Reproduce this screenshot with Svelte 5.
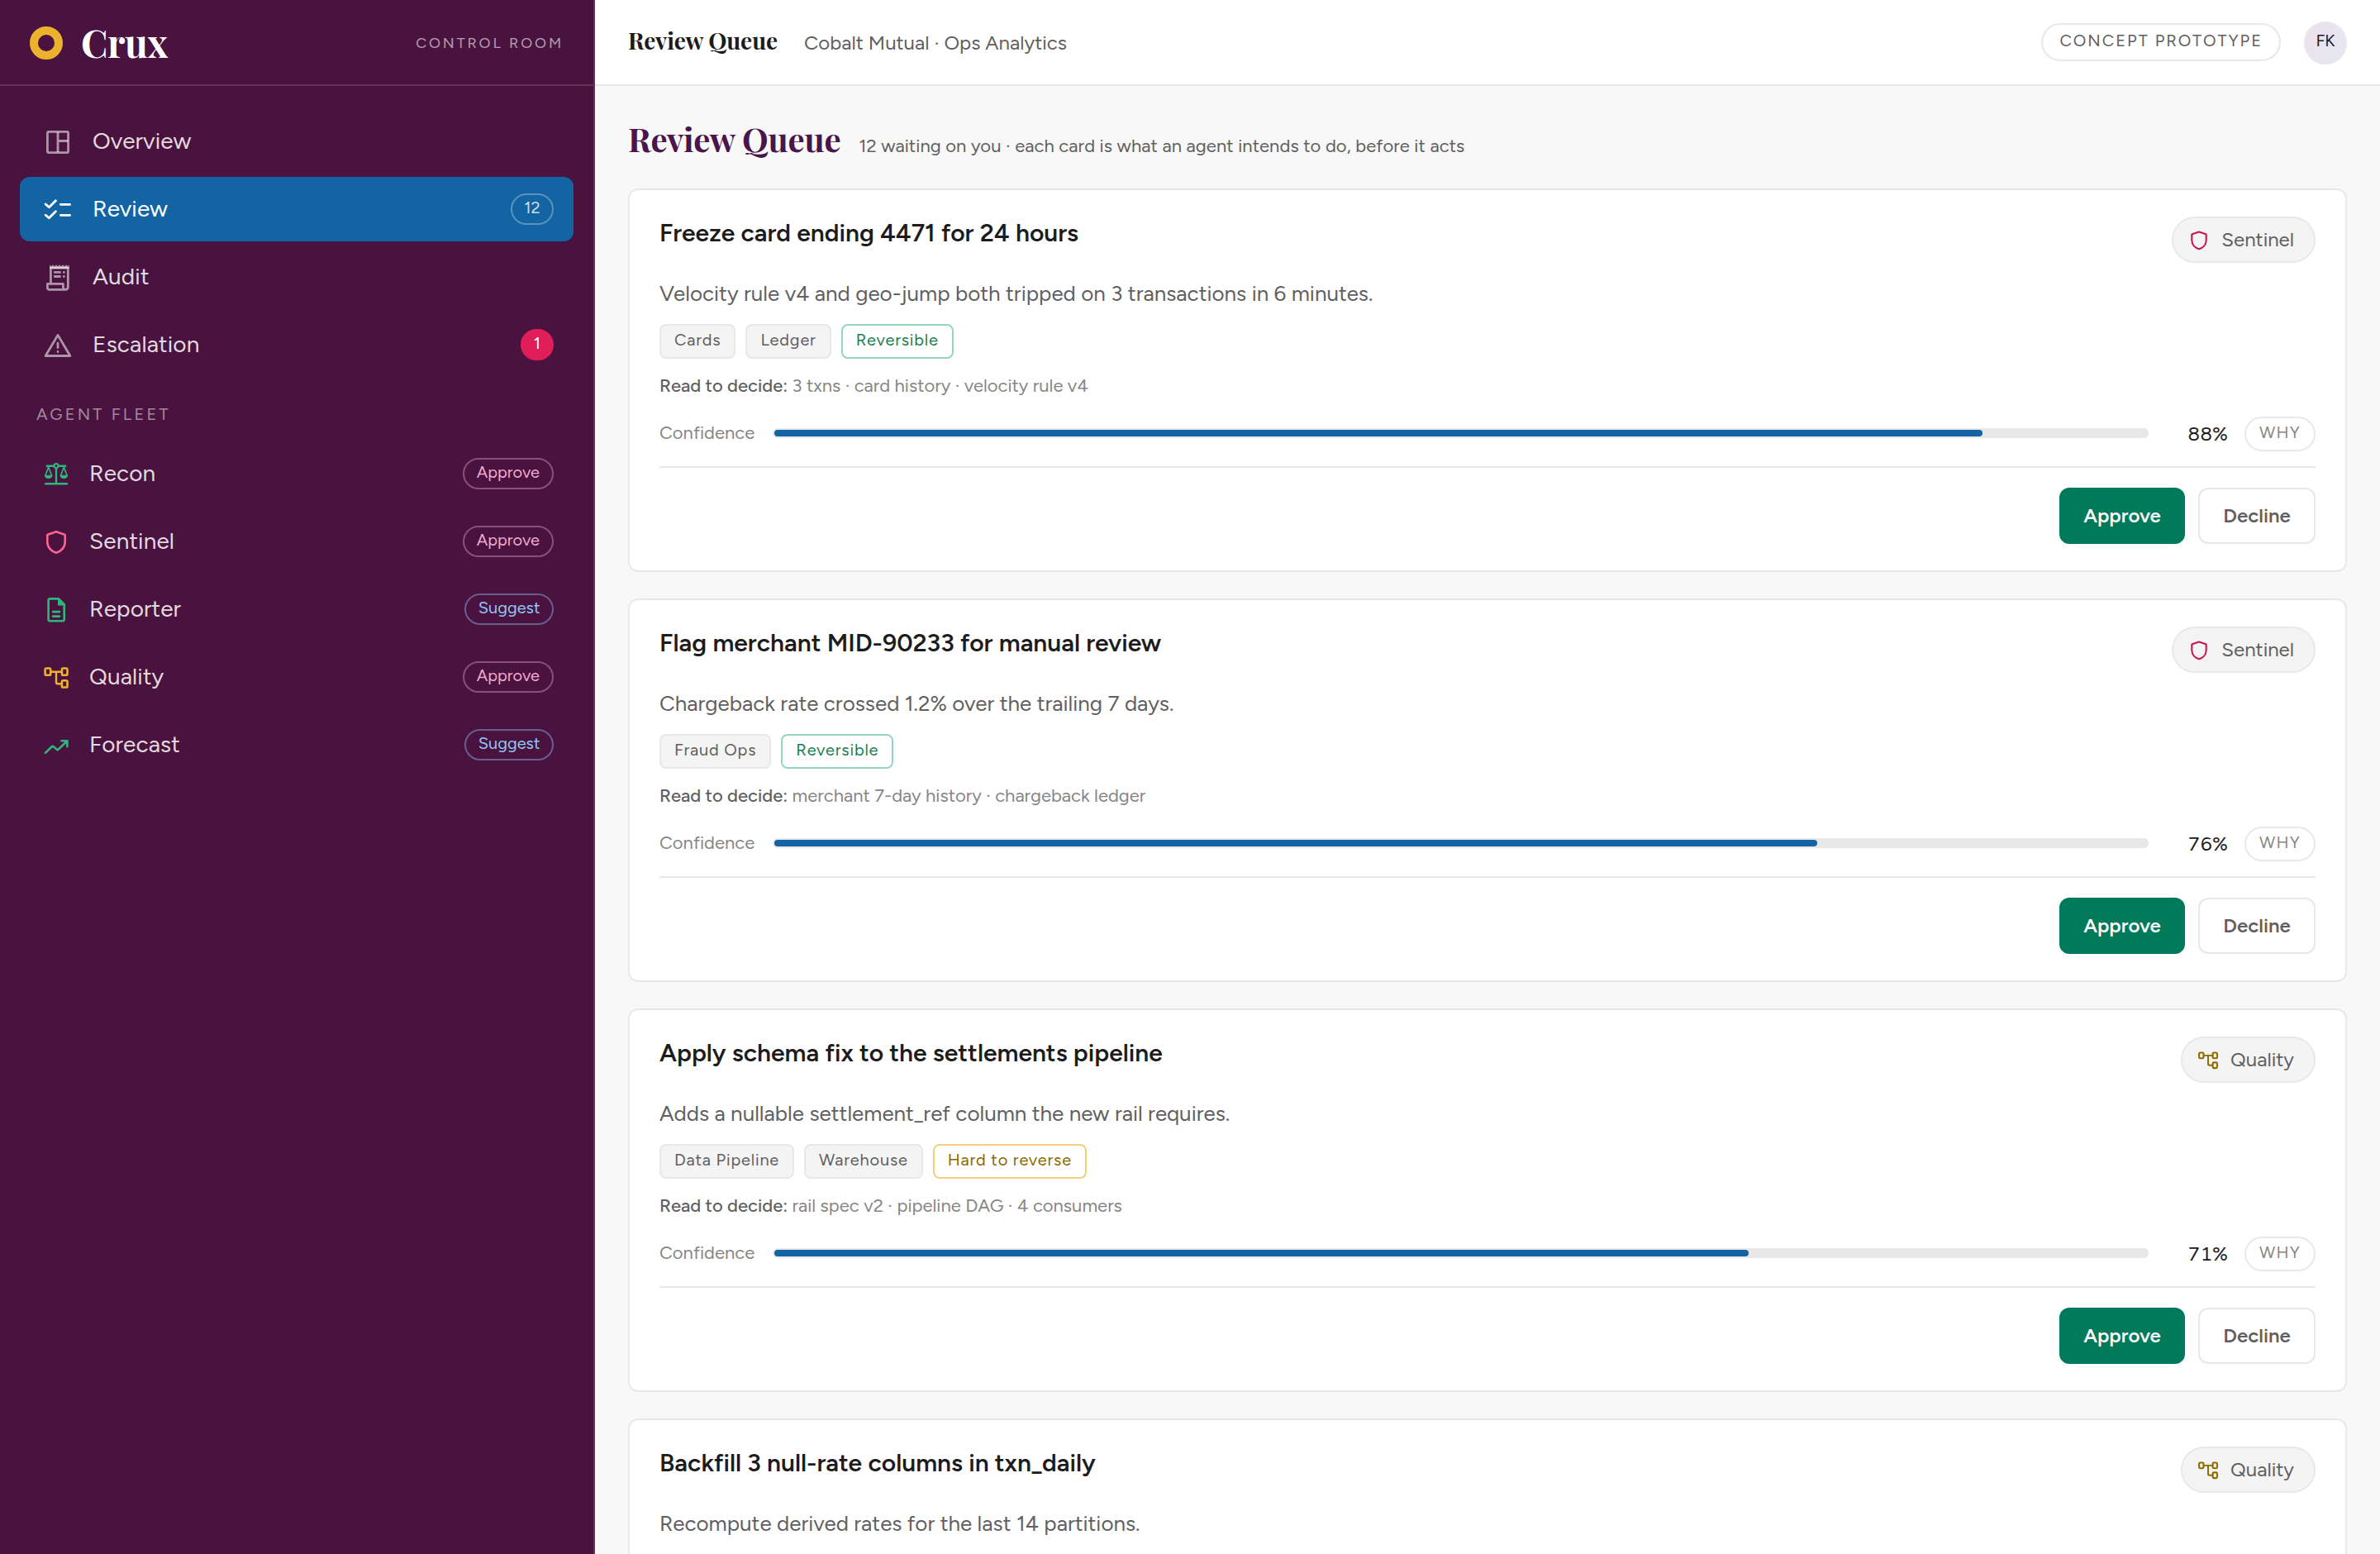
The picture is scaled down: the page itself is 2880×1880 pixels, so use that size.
<script>
  const nav = [
    { label: 'Overview', icon: 'overview' },
    { label: 'Review', icon: 'review', count: 12, active: true },
    { label: 'Audit', icon: 'audit' },
    { label: 'Escalation', icon: 'escalation', alert: 1 }
  ];

  const fleet = [
    { name: 'Recon', icon: 'scales', tone: 'green', mode: 'Approve' },
    { name: 'Sentinel', icon: 'shield', tone: 'pink', mode: 'Approve' },
    { name: 'Reporter', icon: 'file', tone: 'green', mode: 'Suggest' },
    { name: 'Quality', icon: 'flow', tone: 'yellow', mode: 'Approve' },
    { name: 'Forecast', icon: 'trend', tone: 'green', mode: 'Suggest' }
  ];

  const queue = [
    {
      title: 'Freeze card ending 4471 for 24 hours',
      body: 'Velocity rule v4 and geo-jump both tripped on 3 transactions in 6 minutes.',
      agent: 'Sentinel',
      icon: 'shield',
      tags: ['Cards', 'Ledger'],
      reversible: true,
      read: '3 txns · card history · velocity rule v4',
      confidence: 88
    },
    {
      title: 'Flag merchant MID-90233 for manual review',
      body: 'Chargeback rate crossed 1.2% over the trailing 7 days.',
      agent: 'Sentinel',
      icon: 'shield',
      tags: ['Fraud Ops'],
      reversible: true,
      read: 'merchant 7-day history · chargeback ledger',
      confidence: 76
    },
    {
      title: 'Apply schema fix to the settlements pipeline',
      body: 'Adds a nullable settlement_ref column the new rail requires.',
      agent: 'Quality',
      icon: 'flow',
      tags: ['Data Pipeline', 'Warehouse'],
      reversible: false,
      read: 'rail spec v2 · pipeline DAG · 4 consumers',
      confidence: 71
    },
    {
      title: 'Backfill 3 null-rate columns in txn_daily',
      body: 'Recompute derived rates for the last 14 partitions.',
      agent: 'Quality',
      icon: 'flow'
    }
  ];
</script>

{#snippet agentIcon(name, size)}
  <svg viewBox="0 0 32 32" width={size} height={size} fill="none" stroke="currentColor" stroke-width="2.6" stroke-linecap="round" stroke-linejoin="round" aria-hidden="true">
    {#if name === 'scales'}
      <path d="M4.8 6.7h8.4M18.8 6.7h8.4M16 9.7V28M3.2 28.3h25.8" stroke-width="2.4" />
      <circle cx="16" cy="6.5" r="2.6" stroke-width="2" />
      <path d="M6.7 8 2.9 18.2M6.7 8l3.8 10.2M25.3 8l-3.8 10.2M25.3 8l3.8 10.2" stroke-width="1.7" />
      <path d="M2 17.8h9.4c0 2.6-2 4.3-4.7 4.3S2 20.4 2 17.8zM20.6 17.8H30c0 2.6-2 4.3-4.7 4.3s-4.7-1.7-4.7-4.3z" fill="currentColor" stroke="none" />
    {:else if name === 'shield'}
      <path d="M16 4.3 26.2 7.7Q26.7 7.9 26.7 8.5V16.5C26.7 23.5 21.5 28.2 16 29.8C10.5 28.2 5.3 23.5 5.3 16.5V8.5Q5.3 7.9 5.8 7.7Z" />
    {:else if name === 'file'}
      <path d="M8.6 3.4H19L25.7 10.2V28.3a2 2 0 0 1-2 2H8.6a2 2 0 0 1-2-2V5.4a2 2 0 0 1 2-2zM12 19.1h8M12 24.6h8" />
      <path d="M18 3.4 26 11.5H18z" fill="currentColor" stroke="none" />
    {:else if name === 'flow'}
      <rect x="2.6" y="5.5" width="6.6" height="8.3" rx="1.6" />
      <rect x="22.9" y="5.5" width="6.6" height="8.3" rx="1.6" />
      <rect x="22.9" y="20.2" width="6.6" height="8.3" rx="1.6" />
      <path d="M10 9.7h12M16 9.7v12.6a2 2 0 0 0 2 2h4" stroke-width="2.4" />
    {:else if name === 'trend'}
      <path d="M2.9 25.9 10.7 18.3q1-.9 2 0l3.9 3.3q1 .9 2 0L29 11.7M22.5 11.3h6.9v7" />
    {/if}
  </svg>
{/snippet}

<div class="app">
  <aside class="sidebar">
    <div class="brand">
      <span class="mark"></span>
      <span class="brand-name">Crux</span>
      <span class="brand-note">CONTROL ROOM</span>
    </div>

    <nav class="nav">
      {#each nav as item}
        <a class="nav-item" class:active={item.active} href="#{item.icon}">
          <svg viewBox="0 0 36 36" width="36" height="36" fill="none" stroke="currentColor" stroke-width="2.8" stroke-linecap="round" stroke-linejoin="round" aria-hidden="true">
            {#if item.icon === 'overview'}
              <rect x="5.4" y="6.4" width="25.2" height="25.2" rx="1.5" />
              <path d="M18 7v24M18 17.5h12" stroke-linecap="butt" />
            {:else if item.icon === 'review'}
              <path d="M3.2 12 7.4 15.8 15.4 7.8M3.2 25.2 7.4 28.8 15.4 20.8M21.4 12.4h11.2M21.4 25.4h11.2" />
            {:else if item.icon === 'audit'}
              <path d="M9.4 26V7.2H30.3V30.5a2.8 2.8 0 0 1-2.8 2.8H7.4a2 2 0 0 1-2-2V26.4H24.4V30.5a2.8 2.8 0 0 0 2.8 2.8" />
              <path d="M8 8V3.3l2 2 2-2 2 2 2-2 2 2 2-2 2 2 2-2 2 2 2-2 2 2 1.7-2V8z" fill="currentColor" stroke="none" />
              <path d="M14.2 12.4h6.4M14.2 17.5h6.4M25.3 12.4h.1M25.3 17.5h.1" />
            {:else}
              <path d="M18 6.4 32.9 31.5H3.1Z" />
              <path d="M18 16.2v5.4M18 26.4v.1" />
            {/if}
          </svg>
          <span class="label">{item.label}</span>
          {#if item.count}<span class="pill count">{item.count}</span>{/if}
          {#if item.alert}<span class="pill alert">{item.alert}</span>{/if}
        </a>
      {/each}

      <div class="section">AGENT FLEET</div>

      {#each fleet as agent}
        <a class="nav-item agent {agent.tone}" href="#{agent.icon}">
          {@render agentIcon(agent.icon, 32)}
          <span class="label">{agent.name}</span>
          <span class="pill {agent.mode.toLowerCase()}">{agent.mode}</span>
        </a>
      {/each}
    </nav>
  </aside>

  <main class="main">
    <header class="topbar">
      <div class="crumbs">
        <span class="view">Review Queue</span>
        <span class="org">Cobalt Mutual · Ops Analytics</span>
      </div>
      <span class="prototype">CONCEPT PROTOTYPE</span>
      <span class="avatar">FK</span>
    </header>

    <div class="content">
      <div class="heading">
        <h1>Review Queue</h1>
        <p>12 waiting on you · each card is what an agent intends to do, before it acts</p>
      </div>

      <div class="cards">
        {#each queue as item}
          <article class="card">
            <div class="card-head">
              <h2>{item.title}</h2>
              <span class="chip {item.icon}">
                {@render agentIcon(item.icon, 26)}
                <span>{item.agent}</span>
              </span>
            </div>
            <p class="body">{item.body}</p>
            {#if item.tags}
              <div class="tags">
                {#each item.tags as tag}<span class="tag">{tag}</span>{/each}
                {#if item.reversible}
                  <span class="tag ok">Reversible</span>
                {:else}
                  <span class="tag warn">Hard to reverse</span>
                {/if}
              </div>
              <p class="read"><strong>Read to decide:</strong> {item.read}</p>
              <div class="confidence">
                <span class="conf-label">Confidence</span>
                <div class="track"><div class="fill" style:width="{item.confidence}%"></div></div>
                <span class="pct">{item.confidence}%</span>
                <button class="why">WHY</button>
              </div>
              <div class="actions">
                <button class="btn primary">Approve</button>
                <button class="btn">Decline</button>
              </div>
            {/if}
          </article>
        {/each}
      </div>
    </div>
  </main>
</div>

<style>
  :global(body) {
    overflow: hidden;
  }

  .app {
    --line: #e8e8e8;
    --ink: #1d1c1d;
    --muted: #616061;
    --faint: #868686;
    --serif: 'Playfair Display', 'Liberation Serif', serif;
    display: flex;
    height: 100vh;
    overflow: hidden;
    background: #f8f8f8;
    color: var(--ink);
    font-family: Figtree, Inter, sans-serif;
    font-size: 24px;
  }

  .app *,
  .app {
    box-sizing: border-box;
  }

  h1, h2, p {
    margin: 0;
  }

  svg {
    flex: none;
    display: block;
  }

  /* sidebar */
  .sidebar {
    flex: none;
    width: 720px;
    background: #4a123e;
    border-right: 2px solid #653358;
  }

  .brand {
    display: flex;
    align-items: center;
    height: 104px;
    padding: 2px 36px 0;
    border-bottom: 2px solid #653358;
  }

  .mark {
    width: 40px;
    height: 40px;
    border: 10px solid #ecb22e;
    border-radius: 50%;
  }

  .brand-name {
    margin-left: 22px;
    padding-bottom: 2px;
    font: 700 46px/60px var(--serif);
    letter-spacing: -0.01em;
    color: #fff;
  }

  .brand-note {
    margin-left: auto;
    font-size: 18px;
    letter-spacing: 0.16em;
    color: rgba(255, 255, 255, 0.6);
  }

  .nav {
    display: flex;
    flex-direction: column;
    gap: 4px;
    padding: 28px 24px;
  }

  .nav-item {
    display: flex;
    align-items: center;
    height: 78px;
    padding: 0 24px 0 28px;
    border-radius: 12px;
    color: rgba(255, 255, 255, 0.55);
    text-decoration: none;
  }

  .nav-item .label {
    margin-left: 24px;
    padding-bottom: 2px;
    font-size: 28px;
    line-height: 40px;
    letter-spacing: 0.1px;
    color: rgba(255, 255, 255, 0.86);
  }

  .nav-item.active {
    background: #1264a3;
    color: #fff;
  }

  .nav-item.active .label {
    color: #fff;
  }

  .section {
    margin: 26px 0 14px;
    padding-left: 20px;
    font-size: 20px;
    line-height: 30px;
    letter-spacing: 0.16em;
    color: rgba(255, 255, 255, 0.5);
  }

  .agent.green { color: #2eb67d; }
  .agent.pink { color: #ff6490; }
  .agent.yellow { color: #ecb22e; }

  .pill {
    margin-left: auto;
    height: 38px;
    padding: 0 15px;
    border: 2px solid;
    border-radius: 20px;
    font-size: 20px;
    line-height: 30px;
    text-align: center;
  }

  .pill.count {
    width: 52px;
    padding: 0;
    border-color: rgba(255, 255, 255, 0.3);
    color: rgba(255, 255, 255, 0.8);
  }

  .pill.alert {
    width: 40px;
    padding: 0;
    border-color: #e01e5a;
    background: #e01e5a;
    color: #fff;
  }

  .pill.approve {
    border-color: #8c4f7b;
    color: #eda9d4;
  }

  .pill.suggest {
    padding: 0 14.5px;
    border-color: #67608f;
    color: #8fc6f5;
  }

  /* top bar */
  .main {
    flex: 1;
    min-width: 0;
  }

  .topbar {
    display: flex;
    align-items: center;
    height: 104px;
    padding: 0 40px;
    background: #fff;
    border-bottom: 2px solid var(--line);
  }

  .crumbs {
    display: flex;
    align-items: baseline;
    gap: 32px;
    padding-bottom: 5px;
  }

  .view {
    font: 700 28px/40px var(--serif);
    letter-spacing: -0.1px;
  }

  .org {
    color: var(--muted);
  }

  .prototype {
    height: 46px;
    margin-left: auto;
    padding: 0 20px;
    border: 2px solid var(--line);
    border-radius: 23px;
    font-size: 20px;
    line-height: 38px;
    letter-spacing: 0.1em;
    color: var(--muted);
  }

  .avatar {
    width: 52px;
    height: 52px;
    margin: 2px 0 0 28px;
    border: 2px solid var(--line);
    border-radius: 50%;
    background: linear-gradient(135deg, #efe0ec, #e2e9f4);
    font-size: 20px;
    line-height: 42px;
    text-align: center;
  }

  /* queue */
  .content {
    padding: 36px 40px;
  }

  .heading {
    display: flex;
    align-items: baseline;
    gap: 22px;
    height: 56px;
    margin-bottom: 32px;
  }

  h1 {
    font: 700 40px/55px var(--serif);
    letter-spacing: -0.25px;
    color: #4a154b;
  }

  .heading p {
    font-size: 22px;
    letter-spacing: 0.07px;
    color: var(--muted);
  }

  .cards {
    display: flex;
    flex-direction: column;
    gap: 32px;
  }

  .card {
    padding: 32px 36px;
    background: #fff;
    border: 2px solid var(--line);
    border-radius: 12px;
  }

  .card-head {
    display: flex;
    align-items: flex-start;
    justify-content: space-between;
  }

  h2 {
    font-size: 30px;
    font-weight: 600;
    line-height: 40px;
  }

  .chip {
    display: flex;
    align-items: center;
    gap: 14px;
    height: 56px;
    padding: 0 24px 0 18px;
    border: 2px solid var(--line);
    border-radius: 28px;
    background: #f4f4f4;
    line-height: 30px;
    color: var(--muted);
  }

  .chip span {
    padding-bottom: 1px;
  }

  .chip.shield :global(svg) { color: #c6174f; }
  .chip.flow :global(svg) { color: #8f6b00; }

  .body {
    margin-top: 16px;
    font-size: 26px;
    line-height: 42px;
    color: var(--muted);
  }

  .tags {
    display: flex;
    gap: 12px;
    margin-top: 16px;
  }

  .tag {
    height: 42px;
    padding: 0 16px;
    border: 2px solid var(--line);
    border-radius: 8px;
    background: #f4f4f4;
    font-size: 20px;
    line-height: 34px;
    letter-spacing: 0.04em;
    color: var(--muted);
  }

  .tag.ok {
    border-color: #93d8bb;
    background: #fff;
    color: #1a7f54;
  }

  .tag.warn {
    border-color: #f3cf7c;
    background: #fff;
    color: #8a6a00;
  }

  .read {
    margin-top: 16px;
    font-size: 22px;
    line-height: 33px;
    color: var(--faint);
  }

  .read strong {
    font-weight: 500;
    color: var(--muted);
  }

  .confidence {
    display: flex;
    align-items: center;
    gap: 20px;
    height: 42px;
    margin-top: 21px;
  }

  .conf-label {
    width: 117px;
    padding-bottom: 4px;
    font-size: 22px;
    color: var(--faint);
  }

  .track {
    flex: 1;
    height: 12px;
    margin-bottom: 2px;
    border: 2px solid var(--line);
    border-radius: 6px;
    background: var(--line);
  }

  .fill {
    height: 8px;
    border-radius: 4px;
    background: #1264a3;
  }

  .pct {
    width: 76px;
    padding-bottom: 2px;
    text-align: right;
    font-variant-numeric: tabular-nums;
  }

  button {
    font-family: inherit;
    background: #fff;
    border: 2px solid var(--line);
  }

  .why {
    width: 86px;
    height: 42px;
    padding: 0 0 4px;
    border-radius: 21px;
    font-size: 20px;
    letter-spacing: 0.06em;
    color: var(--faint);
  }

  .actions {
    display: flex;
    justify-content: flex-end;
    gap: 16px;
    margin-top: 18px;
    padding-top: 24px;
    border-top: 2px solid var(--line);
  }

  .btn {
    width: 142px;
    height: 68px;
    padding: 0 0 1px;
    border-radius: 12px;
    font-size: 24px;
    font-weight: 600;
    color: var(--muted);
  }

  .btn.primary {
    width: 152px;
    border-color: #007a5a;
    background: #007a5a;
    color: #fff;
  }
</style>
